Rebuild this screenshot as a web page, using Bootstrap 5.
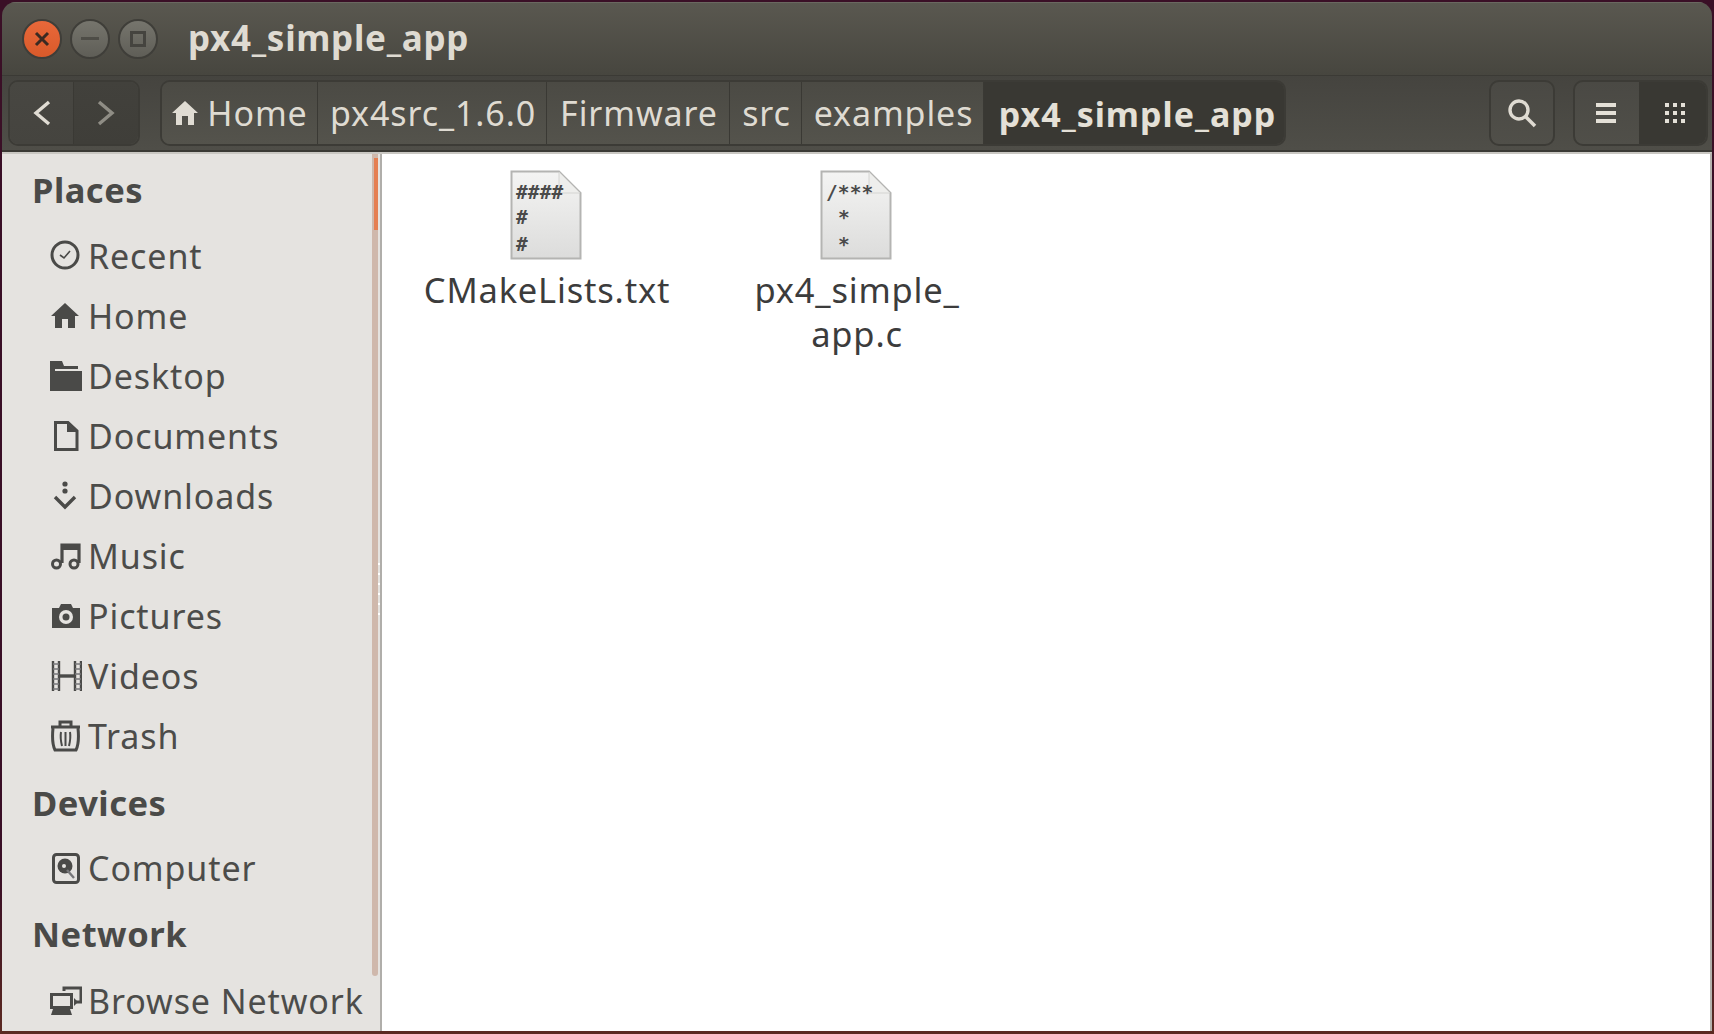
<!DOCTYPE html>
<html lang="en">
<head>
<meta charset="utf-8">
<title>px4_simple_app</title>
<link href="https://cdn.jsdelivr.net/npm/bootstrap@5.3.0/dist/css/bootstrap.min.css" rel="stylesheet">
<style>
html,body{margin:0;height:100%;overflow:hidden;background:#3a0f26}
body{font-family:"Noto Sans","Open Sans",sans-serif}
.win{width:1714px;height:1034px;padding:2px 2px 3px 2px;background:linear-gradient(180deg,#3a0f26 0,#3a0f26 85%,#5c2a22 100%)}
.frame{height:100%;border-radius:14px 14px 0 0;overflow:hidden}
.tbar{height:74px;background:linear-gradient(180deg,#5a5850 0,#47463f 100%);border-bottom:1px solid #3b3a35;padding-left:20px;box-shadow:inset 0 1px 0 #6a6860}
.wbtn{width:40px;height:40px;border-radius:50%;border:2px solid #3f3e39;background:linear-gradient(180deg,#6f6e67,#88867e);margin-right:8px;flex:none}
.wbtn.cl{background:linear-gradient(180deg,#e8683a,#d95a2a)}
.wbtn.mx,.wbtn.mn{background:linear-gradient(180deg,#76756d,#5f5e57)}
.ttl{font-weight:700;font-size:35px;color:#dfdbd2;margin-left:22px;letter-spacing:.7px}
.tools{height:76px;background:linear-gradient(180deg,#45443f 0,#4f4e48 100%);border-bottom:2px solid #3a3934;padding:4px 4px 4px 6px}
.navg,.crumbs,.viewg,.srch{height:66px;border:2px solid #3c3b36;border-radius:10px;overflow:hidden;background:linear-gradient(180deg,#4a4944,#504f49)}
.navg{width:132px}
.navb{width:64px;border-right:1px solid #3a3934;background:linear-gradient(180deg,#484742,#45443f)}
.navb+.navb{border-right:0;flex:1;background:linear-gradient(180deg,#42413c,#3f3e39)}
.crumbs{margin-left:20px;width:1126px;background:none;border-color:#3c3b36}
.crumb{color:#dfdbd2;font-size:34px;border-right:1px solid #3a3934;background:linear-gradient(180deg,#4b4a44,#54534c);white-space:nowrap;gap:8px;letter-spacing:.9px;padding-left:2px}
.c1{width:156px;padding-left:0}.c2{width:229px}.c3{width:183px}.c4{width:72px}.c5{width:182px}
.c6{flex:1;background:#393833;border-right:0;font-weight:700;color:#e4e0d7;font-size:34px;letter-spacing:1px;padding:2px 0 0 7px}
.srch{width:66px;margin-left:203px}
.viewg{width:135px;margin-left:18px}
.viewb{flex:1;padding-right:2px}.viewb+.viewb{background:#393833;padding:0 0 0 6px}
.main{height:calc(100% - 150px);background:#fff;border-top:2px solid #c9c7c2;border-right:2px solid #b5b3ae}
.side{width:380px;background:#e5e3e0;border-right:2px solid #b0aeaa;flex:none}
.slist{width:370px;padding-top:0;flex:none}
.grp{height:60px;padding-left:30px;font-weight:700;font-size:34.5px;color:#4a4a48;letter-spacing:.5px;flex:none}
.grp.g1{height:72px}
.itm{height:60px;padding:0 0 0 48px;font-size:34px;color:#4c4c4a;gap:6px;letter-spacing:.9px;white-space:nowrap;flex:none}
.itm svg{flex:none}
.grp.g2{height:72px;padding-top:1px}
.grp.g3{height:73px;padding-bottom:1px}
.trough{width:6px;height:822px;background:#cfb8ac;padding:4px 0 0 2px;border-radius:0 0 3px 3px;flex:none}
.thumb{width:4px;height:72px;background:#e57f52}
.grip{width:2px;height:60px;margin-top:409px;background:repeating-linear-gradient(180deg,#fff 0,#fff 2px,transparent 2px,transparent 10px);flex:none}
.files{padding:16px 0 0 10px;flex:1}
.cell{width:310px;color:#3c3c3c;font-size:34.5px;line-height:44px;text-align:center;letter-spacing:.8px}
.ficon{padding-right:3px;margin-bottom:8px}
.ficon svg{display:block;margin:0 auto}
.ftxt{font-family:"DejaVu Sans Mono","Liberation Mono",monospace;font-size:19.5px;font-weight:700;fill:#4a4a4a;letter-spacing:.1px}
</style>
</head>
<body>
<div class="win">
<div class="frame d-flex flex-column">
  <div class="tbar d-flex align-items-center">
    <div class="wbtn cl d-flex align-items-center justify-content-center"><svg width="16" height="16" viewBox="0 0 16 16"><path d="M2 2L14 14M14 2L2 14" stroke="#3a2a22" stroke-width="3"/></svg></div>
    <div class="wbtn mn d-flex align-items-center justify-content-center"><svg width="18" height="4" viewBox="0 0 18 4"><rect width="18" height="3" fill="#4e4d47"/></svg></div>
    <div class="wbtn mx d-flex align-items-center justify-content-center"><svg width="16" height="16" viewBox="0 0 16 16"><rect x="1.5" y="1.5" width="13" height="13" fill="none" stroke="#45443f" stroke-width="3"/></svg></div>
    <div class="ttl">px4_simple_app</div>
  </div>
  <div class="tools d-flex align-items-center">
    <div class="navg d-flex">
      <div class="navb d-flex align-items-center justify-content-center"><svg width="20" height="26" viewBox="0 0 20 26"><path d="M17 2L4 13L17 24" fill="none" stroke="#e0dcd3" stroke-width="3.4"/></svg></div>
      <div class="navb d-flex align-items-center justify-content-center"><svg width="20" height="26" viewBox="0 0 20 26"><path d="M3 2L16 13L3 24" fill="none" stroke="#8f8d85" stroke-width="3.4"/></svg></div>
    </div>
    <div class="crumbs d-flex">
      <div class="crumb c1 d-flex align-items-center justify-content-center"><svg width="28" height="26" viewBox="0 0 28 26"><path d="M14 1L1 13H5V25H11V16H17V25H23V13H27Z" fill="#e0dcd3"/></svg><span>Home</span></div>
      <div class="crumb c2 d-flex align-items-center justify-content-center">px4src_1.6.0</div>
      <div class="crumb c3 d-flex align-items-center justify-content-center">Firmware</div>
      <div class="crumb c4 d-flex align-items-center justify-content-center">src</div>
      <div class="crumb c5 d-flex align-items-center justify-content-center">examples</div>
      <div class="crumb c6 d-flex align-items-center justify-content-center">px4_simple_app</div>
    </div>
    <div class="srch d-flex align-items-center justify-content-center"><svg width="30" height="30" viewBox="0 0 30 30"><circle cx="12" cy="12" r="9" fill="none" stroke="#dfdbd2" stroke-width="3.4"/><path d="M18 18L28 28" stroke="#dfdbd2" stroke-width="3.6"/></svg></div>
    <div class="viewg d-flex">
      <div class="viewb d-flex align-items-center justify-content-center"><svg width="20" height="20" viewBox="0 0 20 20"><g fill="#e4e0d7"><rect width="20" height="4"/><rect y="8" width="20" height="4"/><rect y="16" width="20" height="4"/></g></svg></div>
      <div class="viewb d-flex align-items-center justify-content-center"><svg width="20" height="20" viewBox="0 0 20 20"><g fill="#e4e0d7"><rect width="4" height="4"/><rect x="8" width="4" height="4"/><rect x="16" width="4" height="4"/><rect y="8" width="4" height="4"/><rect x="8" y="8" width="4" height="4"/><rect x="16" y="8" width="4" height="4"/><rect y="16" width="4" height="4"/><rect x="8" y="16" width="4" height="4"/><rect x="16" y="16" width="4" height="4"/></g></svg></div>
    </div>
  </div>
  <div class="main d-flex">
    <div class="side d-flex">
      <nav class="slist nav flex-column flex-nowrap">
        <div class="grp g1 d-flex align-items-center">Places</div>
        <a class="itm nav-link d-flex align-items-center"><svg width="32" height="32" viewBox="0 0 32 32"><circle cx="15" cy="15" r="13" fill="none" stroke="#4a4a48" stroke-width="3"/><path d="M10 15l4 3 6-7" fill="none" stroke="#4a4a48" stroke-width="1.6"/></svg>Recent</a>
        <a class="itm nav-link d-flex align-items-center"><svg width="32" height="32" viewBox="0 0 32 32"><path d="M15 3L1 16H5V28H12V19H18V28H25V16H29Z" fill="#4a4a48"/></svg>Home</a>
        <a class="itm nav-link d-flex align-items-center"><svg width="32" height="32" viewBox="0 0 32 32"><path d="M0 1H12L14 6H28V9H5V31H0Z" fill="#4a4a48"/><rect x="5" y="11" width="27" height="20" fill="#4a4a48"/></svg>Desktop</a>
        <a class="itm nav-link d-flex align-items-center"><svg width="32" height="32" viewBox="0 0 32 32"><path d="M5.500 2.500H18L27 11V29.500H5.500Z" fill="none" stroke="#4a4a48" stroke-width="3"/><path d="M17 3V12H27" fill="#4a4a48"/></svg>Documents</a>
        <a class="itm nav-link d-flex align-items-center"><svg width="32" height="32" viewBox="0 0 32 32"><circle cx="15" cy="4" r="2.600" fill="#4a4a48"/><circle cx="15" cy="11" r="2.600" fill="#4a4a48"/><path d="M5 17L15 27L25 17" fill="none" stroke="#4a4a48" stroke-width="3.400"/></svg>Downloads</a>
        <a class="itm nav-link d-flex align-items-center"><svg width="32" height="32" viewBox="0 0 32 32"><path d="M12 23V5H29V23" fill="none" stroke="#4a4a48" stroke-width="3.200"/><rect x="11" y="4" width="19" height="6" fill="#4a4a48"/><circle cx="6.500" cy="24" r="4" fill="none" stroke="#4a4a48" stroke-width="3"/><circle cx="24" cy="24" r="4" fill="none" stroke="#4a4a48" stroke-width="3"/></svg>Music</a>
        <a class="itm nav-link d-flex align-items-center"><svg width="32" height="32" viewBox="0 0 32 32"><path d="M2 8H9L11 4H21L23 8H30V28H2Z" fill="#4a4a48"/><circle cx="16" cy="17" r="7" fill="#e5e3e0"/><circle cx="16" cy="17" r="3.500" fill="#4a4a48"/></svg>Pictures</a>
        <a class="itm nav-link d-flex align-items-center"><svg width="32" height="32" viewBox="0 0 32 32"><path d="M3 1V31M9 1V31M25 1V31M31 1V31" stroke="#4a4a48" stroke-width="2.400"/><path d="M3 4H9M3 9H9M3 14H9M3 19H9M3 24H9M3 29H9M25 4H31M25 9H31M25 14H31M25 19H31M25 24H31M25 29H31" stroke="#77777a" stroke-width="1.500"/><path d="M9 16H25" stroke="#4a4a48" stroke-width="3.400"/></svg>Videos</a>
        <a class="itm nav-link d-flex align-items-center"><svg width="32" height="32" viewBox="0 0 32 32"><path d="M1 7H30M10 6V2H21V6" fill="none" stroke="#4a4a48" stroke-width="3"/><path d="M3 8C2 18 3 26 5 30H26C28 26 29 18 28 8" fill="none" stroke="#4a4a48" stroke-width="3"/><path d="M11 12C10 18 11 22 12 26M15.500 12V26M20 12C21 18 20 22 19 26" fill="none" stroke="#4a4a48" stroke-width="2"/></svg>Trash</a>
        <div class="grp g2 d-flex align-items-center">Devices</div>
        <a class="itm nav-link d-flex align-items-center"><svg width="32" height="32" viewBox="0 0 32 32"><rect x="3.500" y="2.500" width="25" height="28" rx="3" fill="none" stroke="#4a4a48" stroke-width="3"/><circle cx="15" cy="14" r="7.500" fill="#4a4a48"/><circle cx="14" cy="14" r="2" fill="#e5e3e0"/><path d="M17 18L24 26" stroke="#77777a" stroke-width="2.400"/></svg>Computer</a>
        <div class="grp g3 d-flex align-items-center">Network</div>
        <a class="itm nav-link d-flex align-items-center"><svg width="32" height="32" viewBox="0 0 32 32"><path d="M14 6V3H31V17H26" fill="none" stroke="#4a4a48" stroke-width="3"/><rect x="1.500" y="9.500" width="20" height="13" fill="none" stroke="#4a4a48" stroke-width="3"/><path d="M3 24H20L22 30H1Z" fill="#4a4a48"/><path d="M24 13L28 17L24 21Z" fill="#4a4a48"/></svg>Browse Network</a>
      </nav>
      <div class="trough"><div class="thumb"></div></div>
      <div class="grip"></div>
    </div>
    <div class="files d-flex align-items-start">
      <div class="cell">
        <div class="ficon"><svg width="72" height="90" viewBox="0 0 72 90"><defs><linearGradient id="pg" x1="0" y1="0" x2="0" y2="1"><stop offset="0" stop-color="#f4f4f3"/><stop offset="1" stop-color="#dcdcdb"/></linearGradient></defs><path d="M1.500 1.500H49L70.500 23V88.500H1.500Z" fill="url(#pg)" stroke="#b4b4b2" stroke-width="2"/><path d="M49 2V23H70Z" fill="#eeeeec" stroke="#d4d4d2"/><text class="ftxt" x="6" y="29">####</text><text class="ftxt" x="6" y="54">#</text><text class="ftxt" x="6" y="81">#</text></svg></div>
        <div>CMakeLists.txt</div>
      </div>
      <div class="cell">
        <div class="ficon"><svg width="72" height="90" viewBox="0 0 72 90"><path d="M1.500 1.500H49L70.500 23V88.500H1.500Z" fill="url(#pg)" stroke="#b4b4b2" stroke-width="2"/><path d="M49 2V23H70Z" fill="#eeeeec" stroke="#d4d4d2"/><text class="ftxt" x="6" y="29">/***</text><text class="ftxt" x="18" y="54">*</text><text class="ftxt" x="18" y="81">*</text></svg></div>
        <div>px4_simple_<br>app.c</div>
      </div>
    </div>
  </div>
</div>
</div>
<script src="https://cdn.jsdelivr.net/npm/bootstrap@5.3.0/dist/js/bootstrap.bundle.min.js"></script>
</body>
</html>
